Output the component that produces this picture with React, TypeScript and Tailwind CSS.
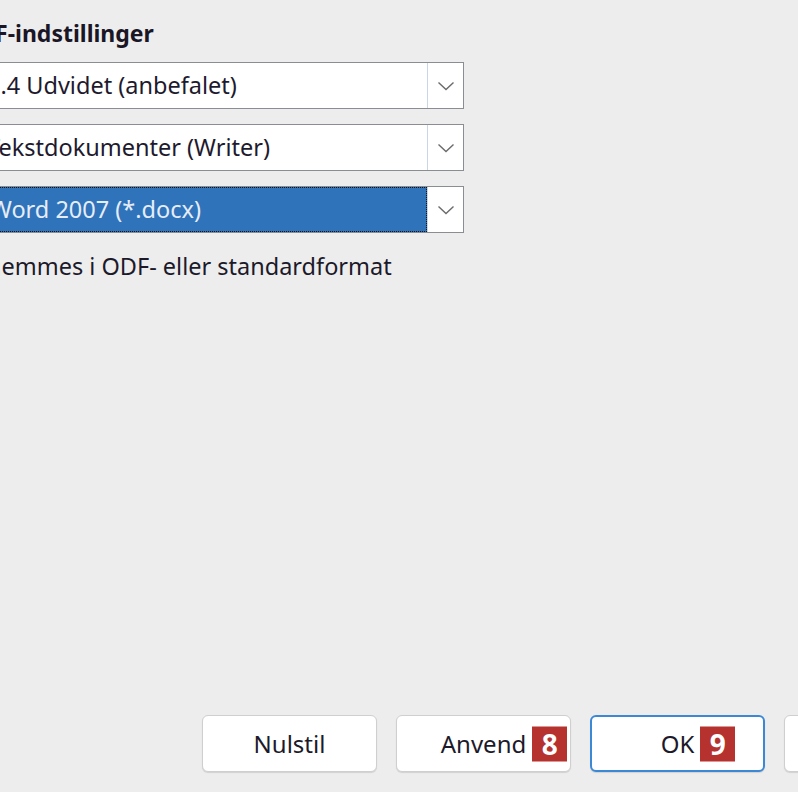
import React from 'react'

const font = { fontFamily: '"Noto Sans", "Open Sans", Arial, sans-serif' }

function Chevron() {
  return (
    <svg width="18" height="10" viewBox="0 0 18 10" fill="none">
      <path d="M1.5 1.5 L9 8.5 L16.5 1.5" stroke="#6b6b6b" strokeWidth="1.4" />
    </svg>
  )
}

function Combo({ text, shift, selected }: { text: string; shift: string; selected?: boolean }) {
  return (
    <div className="flex h-[47px] w-[530px] -ml-[66px] border-[1.5px] border-[#8a8d91] bg-white">
      <div
        className={`flex flex-1 items-center ${
          selected ? 'bg-[#2f73bb] text-[#e6edf7] outline outline-1 outline-dotted outline-[#111] -outline-offset-1' : 'text-[#1e1a2e]'
        }`}
      >
        <span className={`pl-[66px] text-[23.5px] leading-none whitespace-nowrap ${shift}`}>{text}</span>
      </div>
      <div className="flex w-[36px] items-center justify-center border-l border-[#c9d6e3] bg-white">
        <Chevron />
      </div>
    </div>
  )
}

function Badge({ n }: { n: string }) {
  return (
    <span className="absolute left-[calc(100%+6px)] top-1/2 -translate-y-1/2 flex h-[35px] w-[35px] items-center justify-center bg-[#b5322f] text-[28px] font-bold leading-none text-white">
      {n}
    </span>
  )
}

function Button({ label, badge, primary }: { label: string; badge?: string; primary?: boolean }) {
  return (
    <div
      className={`flex h-[57px] w-[175px] shrink-0 items-center justify-center rounded-[6px] bg-white shadow-[0_1px_1px_rgba(0,0,0,0.12)] ${
        primary ? 'border-2 border-[#3b88d6]' : 'border border-[#cfcfcf]'
      }`}
    >
      <span className="relative text-[24px] leading-none text-[#1c1a2a]">
        {label}
        {badge && <Badge n={badge} />}
      </span>
    </div>
  )
}

export default function App() {
  return (
    <div className="relative flex h-[792px] w-[798px] flex-col overflow-hidden bg-[#ededed]" style={font}>
      <div className="pt-[19px]">
        <div className="-ml-[40px] text-[23px] font-bold leading-[28px] text-[#1a1626] whitespace-nowrap">
          ODF-indstillinger
        </div>
        <div className="mt-[15px] flex flex-col gap-[15px]">
          <Combo text="1.4 Udvidet (anbefalet)" shift="-ml-[14px]" />
          <Combo text="Tekstdokumenter (Writer)" shift="-ml-[14px]" />
          <Combo text="Word 2007 (*.docx)" shift="-ml-[11px]" selected />
        </div>
        <div className="mt-[19px] -ml-[13px] text-[23.5px] leading-[28px] text-[#1c1a2a] whitespace-nowrap">
          gemmes i ODF- eller standardformat
        </div>
      </div>
      <div className="flex-1" />
      <div className="mb-[20px] ml-[202px] flex gap-[19px]">
        <Button label="Nulstil" />
        <Button label="Anvend" badge="8" />
        <Button label="OK" badge="9" primary />
        <Button label="Annuller" />
      </div>
    </div>
  )
}
